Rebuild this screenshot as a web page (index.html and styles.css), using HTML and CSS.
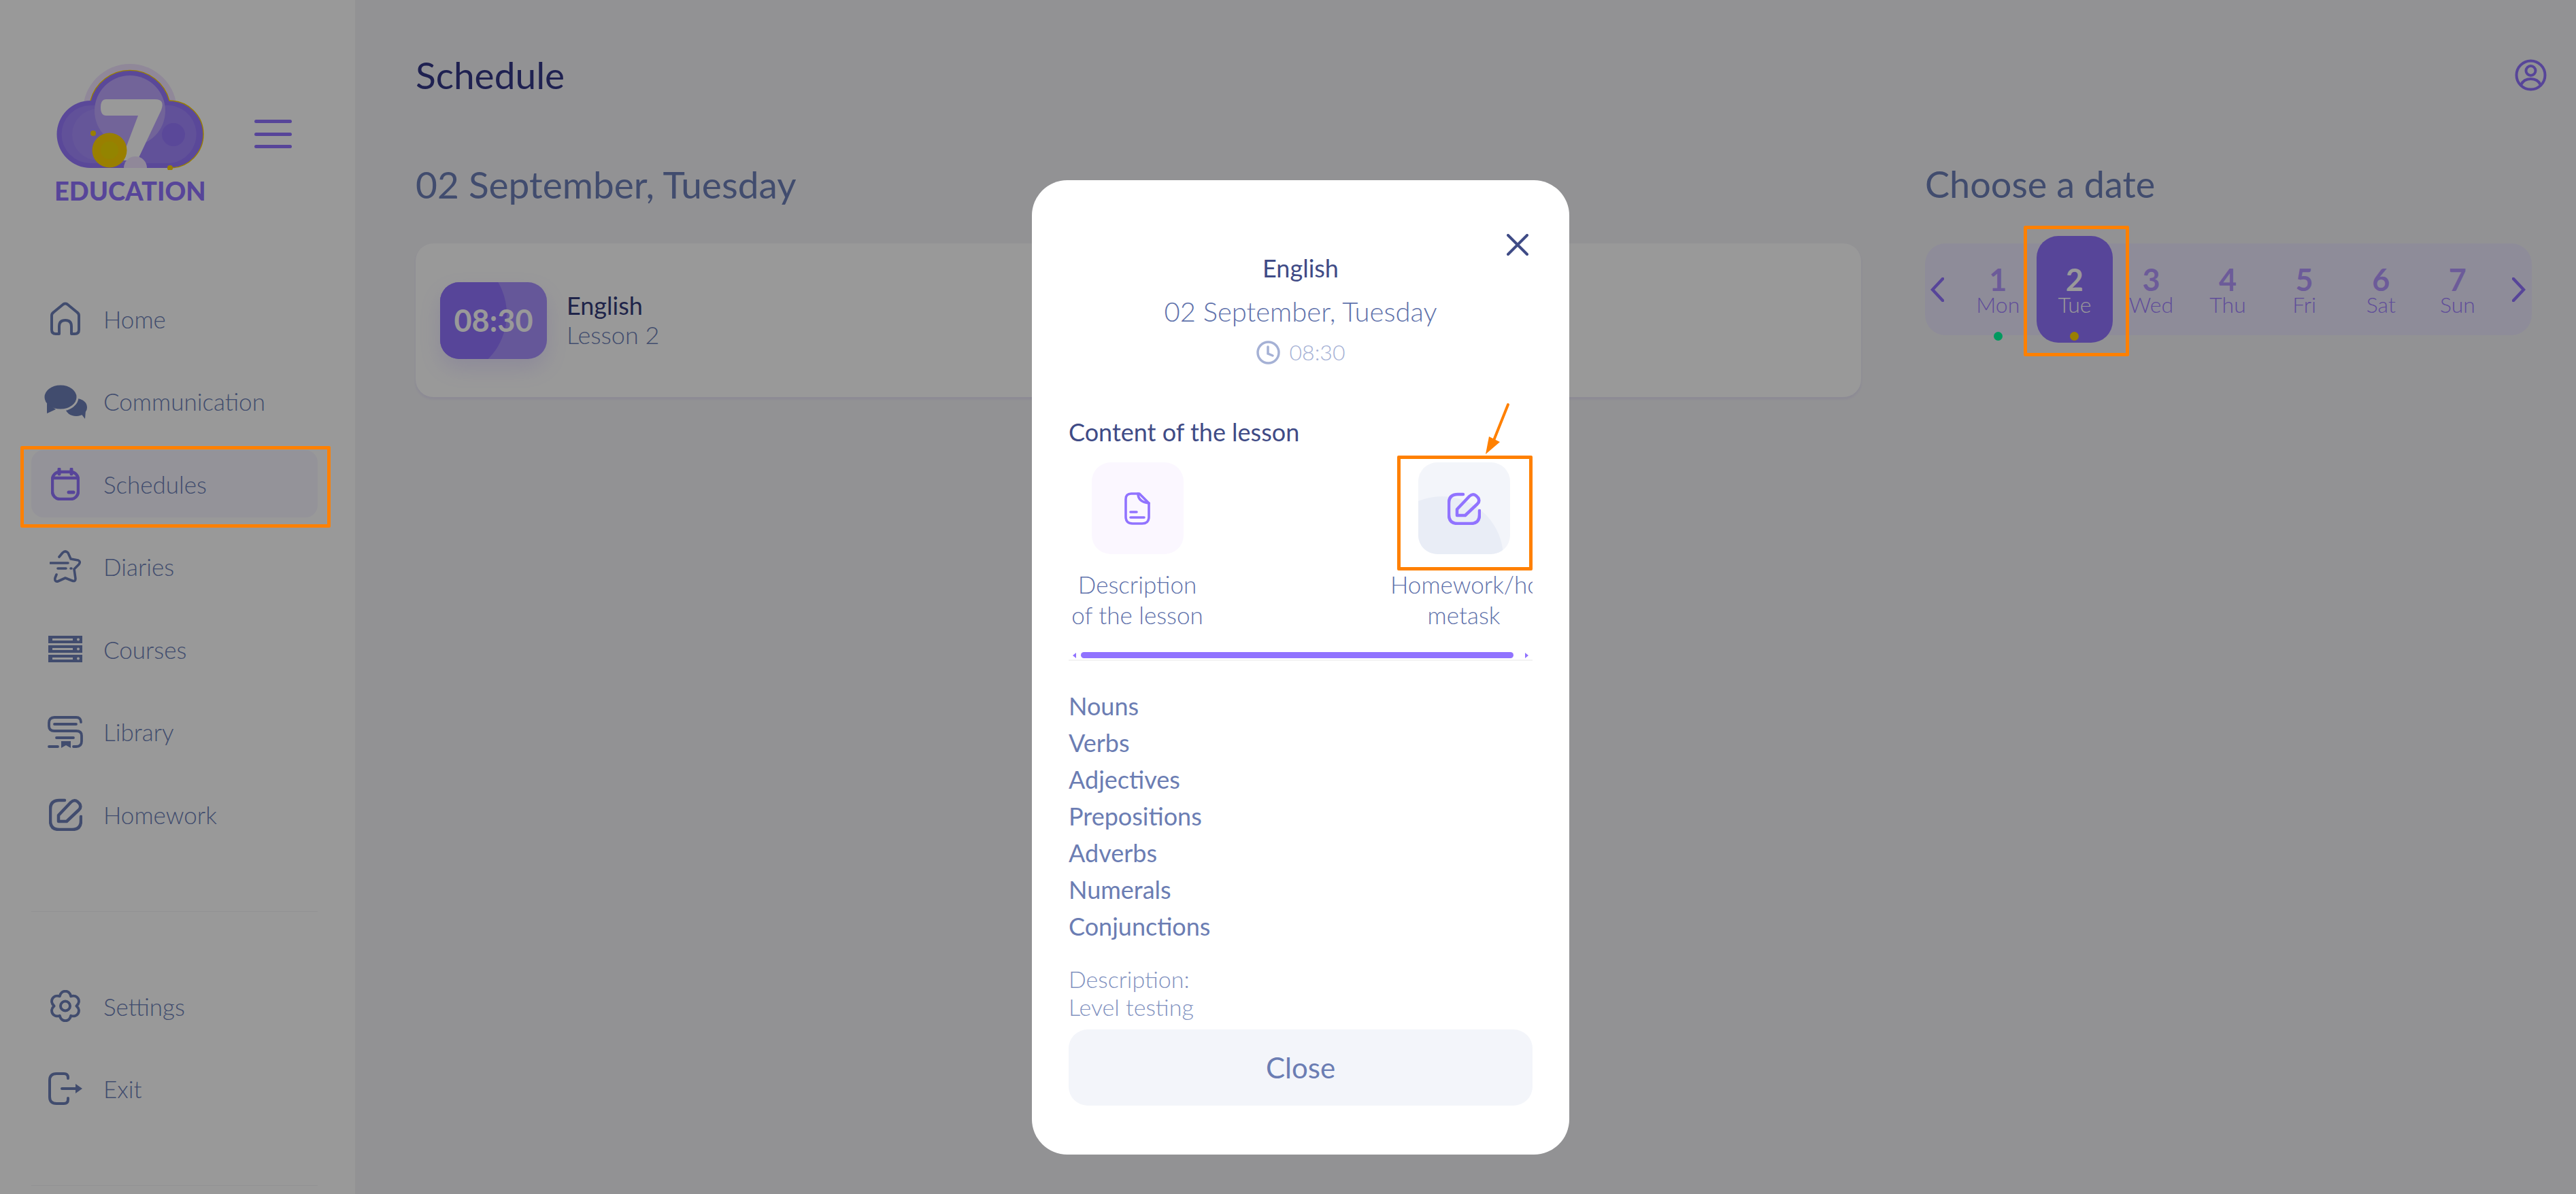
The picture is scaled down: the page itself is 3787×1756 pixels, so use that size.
FILE: index.html
```html
<!DOCTYPE html>
<html lang="en">
<head>
    <meta charset="UTF-8">
    <meta name="viewport" content="width=device-width, initial-scale=1.0">
    <title>Schedule</title>
    <link rel="stylesheet" href="styles.css">
</head>
<body>
    <svg class="icon-defs" width="0" height="0">
        <symbol id="icon-edit" viewBox="0 0 49 48">
            <path d="M23 3H15Q2 3 2 16V33Q2 46 15 46H34Q47 46 47 33V27" fill="none" stroke="currentColor" stroke-width="4.5" stroke-linecap="round"/>
            <path d="M14 25L32 6Q37 1 42 5L45 8Q48 13 44 17L26 34H14Z" fill="none" stroke="currentColor" stroke-width="4.5" stroke-linejoin="round"/>
        </symbol>
    </svg>

    <aside class="sidebar">
        <div class="brand">
            <div class="logo">
                <svg class="logo-mark" viewBox="32 24 218 156" width="218" height="156">
                    <circle cx="141" cy="93" r="69" fill="#f0e3ff"/>
                    <path d="M83 177A49.5 49.5 0 0 1 83 78A60 60 0 0 1 199 78A49.5 49.5 0 0 1 200 177Z" fill="#9678ff"/>
                    <path d="M83 170A42.5 42.5 0 0 1 83 85H192A42.5 42.5 0 0 1 200 170Z" fill="#a287ff"/>
                    <circle cx="94" cy="128" r="38" fill="#a88fff"/>
                    <circle cx="141" cy="93" r="52" fill="#bea7ff"/>
                    <circle cx="205" cy="128" r="17" fill="#9678ff"/>
                    <path d="M83 78A60 60 0 0 1 199 78A49.5 49.5 0 0 1 200 177" fill="none" stroke="#ffd400" stroke-width="1.4"/>
                    <path d="M106 76H178Q193 76 187 92L152 166H128L153 100H106Q98 100 98 88Q98 76 106 76Z" fill="#fff"/>
                    <path d="M132 177A17 17 0 0 1 166 177Z" fill="#f0e3ff"/>
                    <circle cx="111" cy="151" r="25.5" fill="#ffd400"/>
                    <circle cx="111" cy="151" r="13" fill="#f5dc00"/>
                    <circle cx="87" cy="126" r="4" fill="#ffd400"/>
                    <circle cx="200" cy="177" r="4" fill="#ffd400"/>
                </svg>
                <div class="logo-text">EDUCATION</div>
            </div>
            <div class="burger"><span></span><span></span><span></span></div>
        </div>

        <nav class="nav">
            <a class="nav-item">
                <span class="nav-icon"><svg width="44" height="49" viewBox="0 0 44 49" fill="none" stroke="currentColor" stroke-width="4"><path d="M2 20Q2 17 5 15L19 3.5Q22 1.5 25 3.5L39 15Q42 17 42 20V41Q42 47 36 47H31V36Q31 27 22 27Q13 27 13 36V47H8Q2 47 2 41Z" stroke-linejoin="round"/></svg></span>
                Home
            </a>
            <a class="nav-item">
                <span class="nav-icon"><svg width="64" height="51" viewBox="0 0 64 51" fill="currentColor"><ellipse cx="48" cy="34" rx="16" ry="13"/><path d="M54 42L61 51L62 38Z"/><ellipse cx="25" cy="19" rx="25" ry="19" stroke="#fff" stroke-width="3"/><path d="M5 28L5 43L18 37Z"/></svg></span>
                Communication
            </a>
            <a class="nav-item nav-item-active">
                <span class="nav-icon"><svg width="42" height="48" viewBox="0 0 42 48" fill="none" stroke="currentColor" stroke-width="4.5"><rect x="2" y="6" width="38" height="40" rx="11"/><path d="M2 15H40"/><path d="M12 2V9M30 2V9" stroke-linecap="round" stroke-width="5"/><path d="M26 36H33" stroke-linecap="round" stroke-width="5"/></svg></span>
                Schedules
            </a>
            <a class="nav-item">
                <span class="nav-icon"><svg width="46" height="48" viewBox="0 0 46 48" fill="none" stroke="currentColor" stroke-width="3.6" stroke-linecap="round" stroke-linejoin="round"><path d="M14 10L19 4Q23 0 27 4L31 13L42 15Q46 17 43 21L36 28L38 42Q38 47 33 45L23 41L12 46Q7 47 8 41L10 36"/><path d="M1 19H27M12 27H24M31 27H32"/></svg></span>
                Diaries
            </a>
            <a class="nav-item">
                <span class="nav-icon"><svg width="50" height="39" viewBox="0 0 50 39"><g fill="currentColor"><rect width="50" height="11"/><rect y="14" width="50" height="11"/><rect y="28" width="50" height="11"/></g><g fill="#fff"><rect x="6" y="4" width="30" height="3"/><rect x="6" y="18" width="30" height="3"/><rect x="6" y="32" width="30" height="3"/><circle cx="44" cy="5.5" r="2"/><circle cx="44" cy="19.5" r="2"/><circle cx="44" cy="33.5" r="2"/></g></svg></span>
                Courses
            </a>
            <a class="nav-item">
                <span class="nav-icon"><svg width="52" height="47" viewBox="0 0 52 47" fill="none" stroke="currentColor" stroke-width="3.8" stroke-linecap="round"><path d="M49 9Q49 2 42 2H10Q2 2 2 10V15Q2 22 10 22H42Q50 22 50 29V37Q50 45 42 45H38"/><path d="M10 12H42M13 32H38M2 45H15"/><path d="M20 37H34V47L27 43L20 47Z" fill="currentColor" stroke="none"/></svg></span>
                Library
            </a>
            <a class="nav-item">
                <span class="nav-icon"><svg width="49" height="48"><use href="#icon-edit"/></svg></span>
                Homework
            </a>
        </nav>

        <div class="nav-divider"></div>

        <nav class="nav nav-bottom">
            <a class="nav-item">
                <span class="nav-icon"><svg width="46" height="47" viewBox="0 0 46 47" fill="none" stroke="currentColor" stroke-width="4"><path d="M14.75 9.2C17 -.75 29 -.75 31.25 9.2C41 6.1 47 16.6 39.5 23.5C47 30.4 41 40.9 31.25 37.8C29 47.75 17 47.75 14.75 37.8C5 40.9 -1 30.4 6.500 23.5C-1 16.6 5 6.1 14.75 9.2Z" stroke-linejoin="round"/><circle cx="23" cy="23.5" r="7"/></svg></span>
                Settings
            </a>
            <a class="nav-item">
                <span class="nav-icon"><svg width="50" height="48" viewBox="0 0 50 48" fill="none" stroke="currentColor" stroke-width="4"><path d="M29 9V8Q29 2 23 2H12Q2 2 2 12V36Q2 46 12 46H23Q29 46 29 40V38" stroke-linecap="round"/><path d="M20 24H42" stroke-linecap="round"/><path d="M40 17L50 24L40 31Z" fill="currentColor" stroke="none"/></svg></span>
                Exit
            </a>
        </nav>
        <div class="nav-divider nav-divider-end"></div>
    </aside>

    <main class="main">
        <header class="topbar">
            <h1>Schedule</h1>
            <svg class="profile" width="47" height="47" viewBox="0 0 47 47" fill="none" stroke="currentColor" stroke-width="4"><circle cx="23.500" cy="23.500" r="21"/><circle cx="23.500" cy="17" r="7"/><path d="M9 38Q13 29 23.500 29Q34 29 38 38"/></svg>
        </header>

        <div class="columns">
            <section class="day-col">
                <h2>02 September, Tuesday</h2>
                <div class="lesson-card">
                    <div class="lesson-time"><span>08:30</span></div>
                    <div class="lesson-info">
                        <div class="lesson-name">English</div>
                        <div class="lesson-num">Lesson 2</div>
                    </div>
                </div>
            </section>

            <section class="date-col">
                <h2>Choose a date</h2>
                <div class="date-strip">
                    <div class="strip-arrow"><svg width="20" height="36" viewBox="0 0 20 36" fill="none" stroke="currentColor" stroke-width="4.500" stroke-linecap="round"><path d="M18 2L3 18L18 34"/></svg></div>
                    <div class="day">
                        <div class="day-num">1</div><div class="day-name">Mon</div><i class="dot dot-green"></i>
                    </div>
                    <div class="day day-active">
                        <div class="day-num">2</div><div class="day-name">Tue</div><i class="dot dot-yellow"></i>
                    </div>
                    <div class="day"><div class="day-num">3</div><div class="day-name">Wed</div></div>
                    <div class="day"><div class="day-num">4</div><div class="day-name">Thu</div></div>
                    <div class="day"><div class="day-num">5</div><div class="day-name">Fri</div></div>
                    <div class="day"><div class="day-num">6</div><div class="day-name">Sat</div></div>
                    <div class="day"><div class="day-num">7</div><div class="day-name">Sun</div></div>
                    <div class="strip-arrow strip-arrow-right"><svg width="20" height="36" viewBox="0 0 20 36" fill="none" stroke="currentColor" stroke-width="4.500" stroke-linecap="round"><path d="M2 2L17 18L2 34"/></svg></div>
                </div>
            </section>
        </div>
    </main>

    <div class="backdrop">
        <div class="modal">
            <svg class="modal-close" width="32" height="32" viewBox="0 0 32 32" fill="none" stroke="currentColor" stroke-width="4" stroke-linecap="round"><path d="M2 2L30 30M30 2L2 30"/></svg>
            <div class="modal-subject">English</div>
            <div class="modal-date">02 September, Tuesday</div>
            <div class="modal-time">
                <svg width="35" height="35" viewBox="0 0 35 35" fill="none" stroke="currentColor" stroke-width="3.500" stroke-linecap="round"><circle cx="17.500" cy="17.500" r="15.500"/><path d="M17 9V19L24 22"/></svg>
                08:30
            </div>

            <div class="modal-heading">Content of the lesson</div>
            <div class="tabs">
                <div class="tab">
                    <div class="tab-tile tab-tile-pink">
                        <svg width="38" height="48" viewBox="0 0 38 48" fill="none" stroke="currentColor" stroke-width="3.600" stroke-linecap="round" stroke-linejoin="round"><path d="M10 2H22L36 16V36Q36 46 26 46H12Q2 46 2 36V10Q2 2 10 2Z"/><path d="M20 2Q20 14 36 16M9 29H18M9 37H29"/></svg>
                    </div>
                    <div class="tab-label">Description<br>of the lesson</div>
                </div>
                <div class="tab tab-homework">
                    <div class="tab-tile tab-tile-grey">
                        <svg width="49" height="48"><use href="#icon-edit"/></svg>
                    </div>
                    <div class="tab-label">Homework/home<br>metask</div>
                </div>
            </div>
            <div class="tabs-scroll">
                <i class="scroll-arrow scroll-arrow-left"></i>
                <div class="scroll-thumb"></div>
                <i class="scroll-arrow scroll-arrow-right"></i>
            </div>

            <ul class="topics">
                <li>Nouns</li>
                <li>Verbs</li>
                <li>Adjectives</li>
                <li>Prepositions</li>
                <li>Adverbs</li>
                <li>Numerals</li>
                <li>Conjunctions</li>
            </ul>

            <div class="modal-desc">Description:<br>Level testing</div>
            <button class="modal-btn" type="button">Close</button>
        </div>
    </div>

    <!-- orange marks from the manual, they sit above everything -->
    <div class="mark mark-nav"></div>
    <div class="mark mark-day"></div>
    <div class="mark mark-tab"></div>
    <svg class="mark-arrow" width="40" height="80" viewBox="0 0 40 80" fill="none"><path d="M35 3L13 58" stroke="#ff8000" stroke-width="4" stroke-linecap="round"/><path d="M2 76L7 50L23 58Z" fill="#ff8000"/></svg>
</body>
</html>
```

FILE: styles.css
```css
:root {
    --purple: #9173ff;
    --dark: #3f4b86;
    --muted: #6b7db3;
    --muted-thin: #5f72ab;
    --side-icon: #6d7fb7;
    --orange: #ff8000;
}

* {
    box-sizing: border-box;
}

body {
    margin: 0;
    height: 100vh;
    overflow: hidden;
    display: flex;
    background-color: #f4f4f7;
    font-family: "Lato", "Noto Sans", sans-serif;
    color: var(--dark);
}

.icon-defs {
    position: absolute;
}

/* sidebar */
.sidebar {
    width: 522px;
    flex-shrink: 0;
    background-color: #fff;
    padding: 94px 55px 0 46px;
}

.brand {
    display: flex;
    padding-left: 36px;
}

.logo-mark {
    display: block;
}

.logo-text {
    width: 218px;
    margin-top: 12px;
    margin-left: -2px;
    font-size: 38px;
    line-height: 36px;
    font-weight: 900;
    color: var(--purple);
    white-space: nowrap;
}

.burger {
    margin: 82px 0 0 74px;
    width: 55px;
    display: flex;
    flex-direction: column;
    gap: 13.5px;
}

.burger span {
    height: 5px;
    border-radius: 3px;
    background-color: var(--purple);
}

.nav {
    margin-top: 121px;
    display: flex;
    flex-direction: column;
    gap: 22.5px;
}

.nav-item {
    height: 99px;
    display: flex;
    align-items: center;
    border-radius: 18px;
    font-size: 35px;
    font-weight: 300;
    color: var(--side-icon);
}

.nav-item-active {
    background-color: #f7f6ff;
}

.nav-item-active .nav-icon {
    color: var(--purple);
}

.nav-icon {
    width: 100px;
    margin-right: 6px;
    flex-shrink: 0;
    display: flex;
    justify-content: center;
    color: var(--side-icon);
}

.nav-divider {
    margin-top: 93px;
    height: 1px;
    background-color: #f3f3f5;
}

.nav-bottom {
    margin-top: 89px;
}

.nav-divider-end {
    margin-top: 92px;
}

/* main part */
.main {
    flex: 1;
    padding: 75px 44px 0 89px;
}

.topbar {
    height: 70px;
    display: flex;
    justify-content: space-between;
    align-items: center;
}

h1 {
    margin: 0;
    font-size: 55px;
    line-height: 70px;
    font-weight: 400;
    color: #343888;
}

.profile {
    color: var(--purple);
}

.columns {
    margin-top: 91px;
    margin-right: 22px;
    display: flex;
    gap: 94px;
}

h2 {
    margin: 0 0 52px;
    font-size: 55px;
    line-height: 70px;
    font-weight: 400;
    color: var(--side-icon);
}

.day-col {
    width: 2125px;
}

.date-col {
    flex: 1;
}

.date-col h2 {
    font-size: 54px;
}

.lesson-card {
    height: 226px;
    padding: 56px 36px;
    display: flex;
    align-items: center;
    gap: 29px;
    background-color: #fff;
    border-radius: 26px;
    box-shadow: 0 3px 4px rgba(145, 115, 255, 0.12);
}

.lesson-time {
    position: relative;
    overflow: hidden;
    width: 157px;
    height: 113px;
    display: flex;
    align-items: center;
    justify-content: center;
    border-radius: 28px;
    background-color: #a892ff;
    box-shadow: 0 14px 30px rgba(145, 115, 255, 0.18);
    color: #fff;
    font-size: 45px;
    font-weight: 700;
}

.lesson-time::before {
    content: "";
    position: absolute;
    left: -88px;
    top: -46px;
    width: 186px;
    height: 186px;
    border-radius: 50%;
    background-color: var(--purple);
}

.lesson-time span {
    position: relative;
}

.lesson-name {
    font-size: 36px;
    line-height: 43px;
    font-weight: 400;
    color: #343c7a;
}

.lesson-num {
    font-size: 36px;
    line-height: 43px;
    font-weight: 300;
    color: var(--side-icon);
}

/* date picker */
.date-strip {
    height: 135px;
    display: flex;
    background-color: #edeaff;
    border-radius: 30px;
}

.strip-arrow {
    width: 51px;
    flex-shrink: 0;
    padding: 50px 0 0 8px;
    color: var(--purple);
}

.strip-arrow-right {
    margin-left: auto;
    padding-left: 24px;
    width: 53px;
}

.day {
    width: 112.6px;
    height: 157px;
    margin-top: -11px;
    padding-top: 43px;
    display: flex;
    flex-direction: column;
    align-items: center;
    flex-shrink: 0;
    color: #b598ff;
    border-radius: 32px;
}

.day-active {
    background-color: var(--purple);
    color: #fff;
}

.day-num {
    font-size: 45px;
    line-height: 42px;
    font-weight: 700;
}

.day-name {
    font-size: 32px;
    line-height: 31px;
    font-weight: 300;
    white-space: nowrap;
    color: #a080ff;
}

.day-active .day-name {
    color: #fff;
}

.dot {
    margin-top: 25px;
    width: 13px;
    height: 13px;
    border-radius: 50%;
}

.dot-green {
    background-color: #00ff9f;
}

.dot-yellow {
    background-color: #ffd400;
}

/* modal */
.backdrop {
    position: fixed;
    inset: 0;
    background-color: rgba(0, 0, 0, 0.4);
}

.modal {
    position: absolute;
    left: 1517px;
    top: 265px;
    width: 790px;
    height: 1433px;
    padding: 107px 54px 0;
    background-color: #fff;
    border-radius: 52px;
}

.modal-close {
    position: absolute;
    right: 60px;
    top: 79px;
    color: var(--dark);
}

.modal-subject {
    text-align: center;
    font-size: 36px;
    line-height: 44px;
    color: var(--dark);
}

.modal-date {
    margin-top: 20px;
    text-align: center;
    font-size: 40px;
    line-height: 44px;
    font-weight: 300;
    color: var(--muted-thin);
}

.modal-time {
    margin-top: 20px;
    display: flex;
    justify-content: center;
    align-items: center;
    gap: 14px;
    font-size: 32px;
    line-height: 36px;
    font-weight: 300;
    color: #a5b1d5;
}

.modal-heading {
    margin-top: 77px;
    font-size: 36px;
    line-height: 44px;
    color: var(--dark);
}

.tabs {
    margin-top: 23px;
    display: flex;
    gap: 271px;
    overflow: hidden;
}

.tab {
    width: 202px;
    flex-shrink: 0;
    display: flex;
    flex-direction: column;
    align-items: center;
}

.tab-homework {
    width: 216px;
}

.tab-tile {
    position: relative;
    overflow: hidden;
    width: 135px;
    height: 135px;
    display: flex;
    align-items: center;
    justify-content: center;
    border-radius: 28px;
    color: var(--purple);
}

.tab-tile svg {
    position: relative;
}

.tab-tile-pink {
    background-color: #fbf7ff;
}

.tab-tile-grey {
    background-color: #f3f5fa;
}

.tab-tile-grey::before {
    content: "";
    position: absolute;
    left: -55px;
    top: 50px;
    width: 180px;
    height: 180px;
    border-radius: 50%;
    background-color: #e9edf6;
}

.tab-label {
    align-self: stretch;
    margin-top: 22px;
    text-align: center;
    font-size: 35px;
    line-height: 45px;
    font-weight: 300;
    color: var(--muted-thin);
    white-space: nowrap;
}

.tabs-scroll {
    margin-top: 32px;
    height: 13px;
    display: flex;
    align-items: flex-start;
    justify-content: space-between;
    padding: 0 6px;
    border-bottom: 2px solid #f3f3f3;
}

.scroll-thumb {
    width: 636px;
    height: 9px;
    margin-right: 10px;
    border-radius: 5px;
    background-color: var(--purple);
}

.scroll-arrow {
    margin-top: 1px;
    border: 4px solid transparent;
}

.scroll-arrow-left {
    border-left: none;
    border-right: 5px solid var(--purple);
}

.scroll-arrow-right {
    border-right: none;
    border-left: 5px solid var(--purple);
}

.topics {
    list-style: none;
    margin: 39px 0 0;
    padding: 0;
    font-size: 36px;
    line-height: 54px;
    color: var(--muted);
}

.modal-desc {
    margin-top: 30px;
    font-size: 34px;
    line-height: 41px;
    font-weight: 300;
    color: #8292bf;
}

.modal-btn {
    display: block;
    margin-top: 13px;
    width: 100%;
    height: 112px;
    border: none;
    border-radius: 28px;
    background-color: #f3f5fa;
    color: var(--muted);
    font-family: inherit;
    font-size: 42px;
}

/* annotations */
.mark {
    position: fixed;
    border: 5px solid var(--orange);
    border-radius: 2px;
}

.mark-nav {
    left: 30px;
    top: 656px;
    width: 456px;
    height: 120px;
}

.mark-day {
    left: 2975px;
    top: 332px;
    width: 155px;
    height: 192px;
}

.mark-tab {
    left: 2054px;
    top: 670px;
    width: 199px;
    height: 169px;
}

.mark-arrow {
    position: fixed;
    left: 2182px;
    top: 592px;
}
```
